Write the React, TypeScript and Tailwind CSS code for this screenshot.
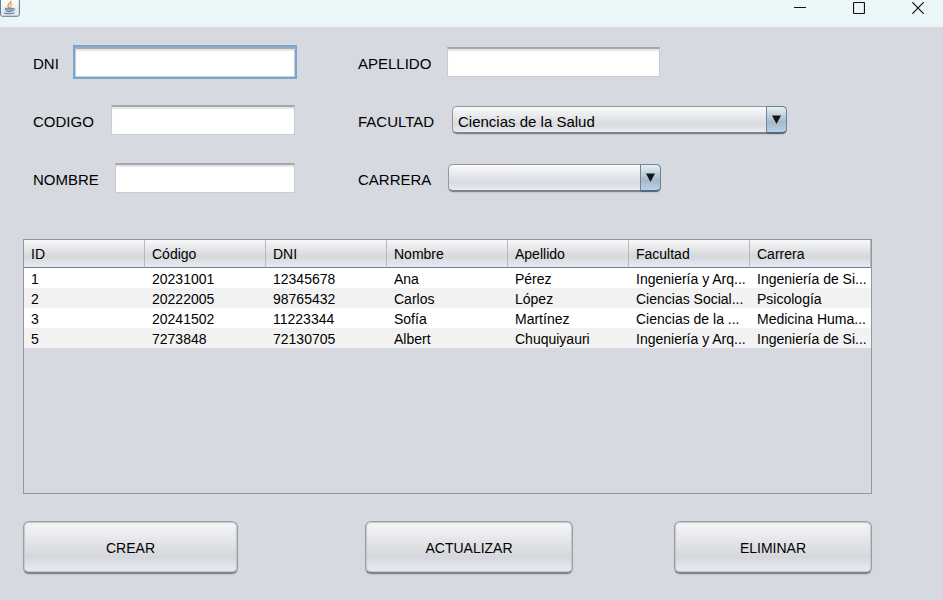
import type { ReactNode } from "react";

const columns = ["ID", "Código", "DNI", "Nombre", "Apellido", "Facultad", "Carrera"];

const rows = [
  ["1", "20231001", "12345678", "Ana", "Pérez", "Ingeniería y Arq...", "Ingeniería de Si..."],
  ["2", "20222005", "98765432", "Carlos", "López", "Ciencias Social...", "Psicología"],
  ["3", "20241502", "11223344", "Sofía", "Martínez", "Ciencias de la ...", "Medicina Huma..."],
  ["5", "7273848", "72130705", "Albert", "Chuquiyauri", "Ingeniería y Arq...", "Ingeniería de Si..."],
];

function JavaIcon() {
  return (
    <svg width="20" height="17" viewBox="0 0 20 17" aria-hidden="true">
      <defs>
        <linearGradient id="tile" x1="0" y1="0" x2="0" y2="1">
          <stop offset="0" stopColor="#ffffff" />
          <stop offset="1" stopColor="#dfe3e8" />
        </linearGradient>
      </defs>
      <path d="M0.5 -1V14.5Q0.5 16.3 2.5 16.3H17.5Q19.4 16.3 19.4 14.5V-1Z" fill="url(#tile)" stroke="#5f7f99" />
      <path d="M10.8 1C11.8 3 7 4 8 6.2C8.4 7 9 7.4 8.8 8" fill="none" stroke="#ee8a35" strokeWidth="1.5" />
      <path d="M12.4 3.6C9.6 4.6 11.6 6 10.4 7.8" fill="none" stroke="#f0a565" strokeWidth="1.2" />
      <path d="M5.2 8.3H12.8V9.4Q12.6 11.6 10.8 11.9H7.6Q5.4 11.4 5.2 8.3Z" fill="#8fa9bf" stroke="#5c7f9e" strokeWidth="0.8" />
      <path d="M13 8.6C15.6 8 15.6 10.4 12.4 10.8" fill="none" stroke="#6a8ba8" />
      <path d="M4 12.6C5.4 14.2 12.6 14.2 14.6 12.6" fill="none" stroke="#5c7f9e" strokeWidth="1.1" />
    </svg>
  );
}

function WindowButton({ label, children }: { label: string; children: ReactNode }) {
  return (
    <button type="button" aria-label={label} className="flex h-full w-[50px] justify-center pt-[2px]">
      <svg width="12" height="12" viewBox="0 0 12 12" fill="none" stroke="#111111" aria-hidden="true">
        {children}
      </svg>
    </button>
  );
}

function TextField({ id, label, labelClass, inputClass }: { id: string; label: string; labelClass: string; inputClass: string }) {
  return (
    <div className="flex h-8 items-center">
      <label htmlFor={id} className={`shrink-0 pt-[3px] ${labelClass}`}>
        {label}
      </label>
      <input
        id={id}
        type="text"
        className={`h-[30px] min-w-0 border border-t-2 border-[#c9ccd0] border-t-[#a6a8ab] bg-white px-1 shadow-[inset_0_2px_1px_#e4e5e6] ${inputClass}`}
      />
    </div>
  );
}

function SelectField({ id, label, labelClass, boxClass, options }: { id: string; label: string; labelClass: string; boxClass: string; options: string[] }) {
  return (
    <div className="flex h-8 items-center">
      <label htmlFor={id} className={`shrink-0 pt-[3px] ${labelClass}`}>
        {label}
      </label>
      <div className={`relative h-7 ${boxClass}`}>
        <select
          id={id}
          className="h-full w-full appearance-none rounded-[5px] border border-b-2 border-[#94979d] border-b-[#7f8288] bg-linear-to-b from-[#fafafb] via-[#d8dade] via-70% to-[#e8ecf6] pt-1 pr-6 pl-[5px] shadow-[0_1px_1px_#c2c5cc]"
        >
          {options.map((option) => (
            <option key={option}>{option}</option>
          ))}
        </select>
        <span className="pointer-events-none absolute inset-y-0 right-0 flex w-[21px] justify-center rounded-r-[5px] border border-b-2 border-[#6d8499] border-b-[#526a80] bg-linear-to-b from-[#e9eff4] via-[#a5b9cb] via-60% to-[#bad0e6] pt-[8px]">
          <svg width="9" height="9" viewBox="0 0 9 9" aria-hidden="true">
            <path d="M0 0.5H9L4.5 9Z" fill="#151515" />
          </svg>
        </span>
      </div>
    </div>
  );
}

function ActionButton({ label, className }: { label: string; className: string }) {
  return (
    <button
      type="button"
      className={`h-[53px] rounded-[6px] border border-b-2 border-[#9b9da2] border-b-[#808388] bg-linear-to-b from-[#f6f6f8] via-[#d5d7dc] via-70% to-[#e9edf7] pt-px text-[14px] shadow-[inset_0_0_1px_1px_#c4c6ca,0_1px_1px_#c2c5cc] ${className}`}
    >
      {label}
    </button>
  );
}

export default function App() {
  return (
    <div className="flex min-h-screen flex-col bg-[#d6d9e0] font-['Liberation_Sans',Arial,sans-serif] text-[15px] leading-5 text-black">
      <header className="flex h-[27px] justify-between bg-[#eaf6f8]">
        <JavaIcon />
        <div className="flex gap-[9px]">
          <WindowButton label="Minimizar">
            <path d="M0 5.5H12" />
          </WindowButton>
          <WindowButton label="Maximizar">
            <rect x="0.5" y="0.5" width="11" height="11" rx="1" strokeWidth="1.2" />
          </WindowButton>
          <WindowButton label="Cerrar">
            <path d="M0.3 0.3L11.7 11.7M11.7 0.3L0.3 11.7" strokeWidth="1.2" />
          </WindowButton>
        </div>
      </header>

      <main className="flex flex-1 flex-col pt-[19px] pr-[71px] pb-[26px] pl-[23px]">
        <form className="flex gap-[63px] pl-[10px]">
          <div className="flex w-[262px] flex-col gap-[26px]">
            <TextField id="dni" label="DNI" labelClass="w-[42px]" inputClass="flex-1 outline-2 outline-[#78a6d3]" />
            <TextField id="codigo" label="CODIGO" labelClass="w-[78px]" inputClass="flex-1" />
            <TextField id="nombre" label="NOMBRE" labelClass="w-[82px]" inputClass="flex-1" />
          </div>
          <div className="flex flex-1 flex-col gap-[26px]">
            <TextField id="apellido" label="APELLIDO" labelClass="w-[89px]" inputClass="w-[213px]" />
            <SelectField id="facultad" label="FACULTAD" labelClass="w-[94px]" boxClass="w-[335px]" options={["Ciencias de la Salud"]} />
            <SelectField id="carrera" label="CARRERA" labelClass="w-[90px]" boxClass="w-[213px]" options={[""]} />
          </div>
        </form>

        <div className="mt-[45px] flex-1 border border-[#9297a1]">
          <table className="w-full table-fixed border-separate border-spacing-0 text-left text-[14px]">
            <thead>
              <tr>
                {columns.map((column) => (
                  <th
                    key={column}
                    scope="col"
                    className="h-7 border-r border-b border-r-[#b5b8be] border-b-[#777b83] bg-linear-to-b from-[#f8f8f9] via-[#d6d8dc] via-60% to-[#e6eaf4] p-0 pt-px pl-[7px] font-normal"
                  >
                    {column}
                  </th>
                ))}
              </tr>
            </thead>
            <tbody>
              {rows.map((row) => (
                <tr key={row[0]} className="h-5 bg-white even:bg-[#f2f2f2]">
                  {row.map((cell, index) => (
                    <td key={index} className="overflow-hidden p-0 pt-[2px] pl-[7px] leading-[18px] whitespace-nowrap">
                      {cell}
                    </td>
                  ))}
                </tr>
              ))}
            </tbody>
          </table>
        </div>

        <div className="mt-[27px] grid grid-cols-[342fr_309fr_198fr]">
          <ActionButton label="CREAR" className="w-[215px]" />
          <ActionButton label="ACTUALIZAR" className="w-[208px]" />
          <ActionButton label="ELIMINAR" className="w-full" />
        </div>
      </main>
    </div>
  );
}
